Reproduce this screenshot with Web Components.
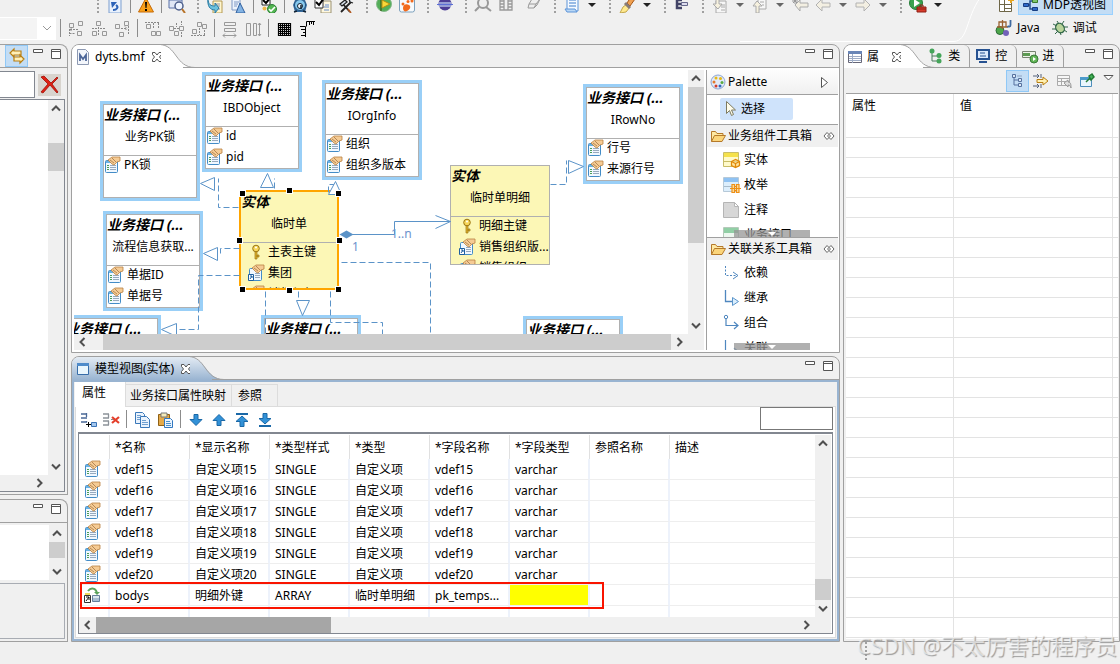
<!DOCTYPE html>
<html lang="zh-CN">
<head>
<meta charset="utf-8">
<title>MDP透视图</title>
<style>
  html, body { margin: 0; height: 100%; background: #f0f0f0; }
  body { font: 12px/16px "Noto Sans", "Noto Sans CJK SC", sans-serif; color: #000; overflow: hidden; }
</style>
</head>
<body>
<ide-window></ide-window>

<script>
const ICONS = {
  undo: '<path d="M2 0h12v15H2z" fill="#e9f1fc" stroke="#7d9fd0"/><path d="M6 12c4 0 6-3 3-5" fill="none" stroke="#2b62b8" stroke-width="2"/><path d="M4 4h6L5 10z" fill="#2b62b8"/>',
  warn: '<path d="M8 0l7.5 14H.5z" fill="#f9a01b" stroke="#c66a06"/><path d="M7 4h2l-.5 6h-1zM7 11h2v2H7z" fill="#000"/>',
  search: '<path d="M0 2h13v8H0z" fill="#dfe6f5" stroke="#5870a8"/><circle cx="10" cy="8" r="4" fill="#eef4ff" stroke="#4d5f8c" stroke-width="1.5"/><path d="M13 11l3 4" stroke="#b8742a" stroke-width="2"/>',
  sync: '<path d="M6 3h9v12H6z" fill="#fff6cf" stroke="#b59a53"/><path d="M8 6h5M8 8h5M10 11h3" stroke="#8a94ad"/><path d="M1 0c0 7 3 8 7 8V5l4 5-4 5v-3C3 12 0 8 1 0z" fill="#6cc1dd" stroke="#2a7ba3"/>',
  docA: '<path d="M2 0h8v12H2z" fill="#edf3fc" stroke="#7f98c4"/><path d="M4 4h5M4 6h4M4 8h3" stroke="#7f98c4"/><path d="M10 5l5 10H6z" fill="#83b3e3" stroke="#2f5f9e"/>',
  check: '<path d="M1 0h8v7H1z" fill="#fff" stroke="#222"/><path d="M2 2l3 3 5-6" fill="none" stroke="#000" stroke-width="2"/><circle cx="11" cy="11" r="4.5" fill="#53b552" stroke="#2c7f35"/><path d="M8 11l2 2 4-4" stroke="#fff" stroke-width="1.6" fill="none"/><circle cx="3.500" cy="10.500" r="2" fill="#efb94d"/>',
  clock: '<path d="M3 2h10l2 5-2 7H3L1 7z" fill="#376b9e"/><circle cx="8" cy="7" r="5.500" fill="#85c7ed" stroke="#1f4d7a"/><circle cx="8" cy="8" r="2.500" fill="#eff8ff" stroke="#123"/><path d="M9 7v4M2 14l3-1M14 14l-3-1" stroke="#123" stroke-width="1.500"/>',
  task: '<path d="M6 3h10v12H6z" fill="#fff8df" stroke="#9b9273"/><path d="M10 7h4M9 9h5M9 12h5" stroke="#668ccc"/><path d="M0 0h8v10H0z" fill="#fff" stroke="#333"/><path d="M1 4l3 3 5-7" fill="none" stroke="#000" stroke-width="2"/>',
  tools: '<path d="M3 14L13 4M4 5l8 9" stroke="#222" stroke-width="1.800"/><path d="M2 6l5-4 2 2-5 4zM11 1l1 3 3 1" fill="#d9e2ec" stroke="#222" stroke-width="1.300"/><path d="M10 11l3 4" stroke="#b45b22" stroke-width="1.500"/>',
  flag: '<circle cx="8" cy="6" r="7.500" fill="#54ae58" stroke="#86b98a"/><path d="M5 1v12" stroke="#3e6b25" stroke-width="1.500"/><path d="M6 2l8 4-8 4z" fill="#f9d738" stroke="#b38d12"/>',
  paw: '<rect x=".5" y="-3" width="15" height="17" rx="2" fill="#f7fafc" stroke="#7da1bd"/><path d="M4 10c0-3 3-5 6-3s0 5-2 6-4 0-4-3z" fill="#f26a1c"/><circle cx="4" cy="6" r="1.500" fill="#f26a1c"/><circle cx="9" cy="3.500" r="1.500" fill="#f26a1c"/><circle cx="13" cy="3" r="1.500" fill="#f26a1c"/>',
  eclipse: '<circle cx="8" cy="6" r="6.500" fill="#4c3d96"/><path d="M2 5h12M2 8h12" stroke="#aebde9" stroke-width="1.500"/><path d="M0 6.500h16" stroke="#5b6fd6"/>',
  searchGray: '<circle cx="8" cy="5" r="5" fill="#eee" stroke="#999" stroke-width="2"/><path d="M11 9l5 4M4 9l-4 4" stroke="#999" stroke-width="2"/>',
  film: '<path d="M2 -1h12v13H2zM6 0v12M10 0v12M2 3h4M2 6h4M2 9h4M10 3h4M10 6h4M10 9h4" fill="none" stroke="#999" stroke-width="1.300"/>',
  eraser: '<path d="M3 6l3-5h8l-3 6-3 3H2zM3 6h7l4-5M10 6l-2 4" fill="#eee" stroke="#9a9a9a"/>',
  script: '<path d="M3-2h11v15H3z" fill="#f4f9ff" stroke="#5d94d8"/><path d="M5 2h7M5 5h7M5 8h7" stroke="#3c7dcb"/><path d="M1 11h10l2 3H3z" fill="#b9d7f5" stroke="#5d94d8"/>',
  brush: '<path d="M1 15l3-6 4-3 3 3-4 5z" fill="#ffe98e" stroke="#c2a64a"/><path d="M8 5l4-6 4 2-5 7z" fill="#f0a050" stroke="#a4581a"/><path d="M6 5l5 5" stroke="#887c78" stroke-width="3"/>',
  link: '<path d="M8 2H3v8h5M3 6h6" fill="none" stroke="#424366" stroke-width="2.500"/><path d="M7.500 4.500h6v3h-6z" fill="#dde" stroke="#66678b"/>',
  docDown: '<path d="M4 3h10v12H4z" fill="#f7f7f7" stroke="#aaa"/><path d="M9 7h4M9 9h4M9 12h4" stroke="#aaa"/><path d="M4 0h3v6h3l-4 5-5-5h3z" fill="#f6f1df" stroke="#aaa"/>',
  docUp: '<path d="M6 1h8v10H6z" fill="#f7f7f7" stroke="#aaa"/><path d="M8 4h4M10 7h2" stroke="#aaa"/><path d="M4 15V8H1l4-5 5 5H7v7z" fill="#f6f1df" stroke="#aaa"/>',
  backStar: '<path d="M3 7l5-5v3h8v4H8v4z" fill="#f3efe2" stroke="#aaa"/><path d="M3 0v6M0 3h6M1 1l4 4M5 1L1 5" stroke="#999"/>',
  back: '<path d="M1 7l6-6v4h8v4H7v4z" fill="#f3efe2" stroke="#b2b2b2"/>',
  fwd: '<path d="M15 7L9 1v4H1v4h8v4z" fill="#f3efe2" stroke="#b2b2b2"/>',
  run: '<circle cx="6" cy="5" r="6.500" fill="#39a250" stroke="#257c37"/><path d="M4 1l6 4-6 4z" fill="#fff"/><path d="M7 9h9v5H7z" fill="#d83a2b" stroke="#8e1e14"/><path d="M10 9V7h3v2M7 11h9" stroke="#8e1e14" fill="none"/>',
  al1: '<path d="M1.500 2.500h4v4h-4zM10.500 .5h4v4h-4z" fill="none" stroke="#999"/><path d="M2 8.500h9M4 6.500l-2 2 2 2M1.500 8v7M1.500 12.500h6" fill="none" stroke="#888" stroke-dasharray="2 1"/><path d="M9.500 10.500h4v4h-4z" fill="none" stroke="#999"/>',
  al2: '<path d="M5.500 .5h4v4h-4zM1.500 10.500h4v4h-4zM11.500 10.500h4v4h-4z" fill="none" stroke="#999"/><path d="M1 7.500h5M9 7.500h6M7.500 6v9" fill="none" stroke="#888" stroke-dasharray="2 1"/>',
  al3: '<path d="M10.500 .5h4v4h-4zM1.500 3.500h4v4h-4zM5.500 11.500h4v4h-4z" fill="none" stroke="#999"/><path d="M7 7.500h6M11 5.500l2 2-2 2M14.500 5v9" fill="none" stroke="#888" stroke-dasharray="2 1"/>',
  al4: '<path d="M1.500 3.500h4v4h-4zM6.500 10.500h4v4h-4zM11.500 10.500h4v4h-4z" fill="none" stroke="#999"/><path d="M0 1.500h15M8.500 2v6M13.500 2v6" fill="none" stroke="#888" stroke-dasharray="2 1"/>',
  al5: '<path d="M1.500 5.500h4v4h-4zM6.500 10.500h4v4h-4zM11.500 5.500h4v4h-4z" fill="none" stroke="#999"/><path d="M6 7.500h5M8.500 2v4M13.500 0v4M13.500 11v5" fill="none" stroke="#888" stroke-dasharray="2 1"/>',
  al6: '<path d="M1.500 8.500h4v4h-4zM6.500 1.500h4v4h-4zM11.500 3.500h4v4h-4z" fill="none" stroke="#999"/><path d="M0 14.500h15M8.500 7v7M13.500 9v5" fill="none" stroke="#888" stroke-dasharray="2 1"/>',
  al7: '<path d="M2.500 1.500h11v3h-11zM2.500 7.500h11v3h-11zM1 14.500h13M3 12.500l-2 2 2 2M12 12.500l2 2-2 2" fill="none" stroke="#999"/>',
  al8: '<path d="M1.500 2.500h4v12h-4zM8.500 2.500h3v12h-3zM14.500 2v13M13 4l1.500-2L16 4M13 13l1.500 2 1.500-2" fill="none" stroke="#999"/>',
  grid: '<path d="M2 2h13v13H2z" fill="#fff"/><path d="M2.500 2v13M4.500 2v13M6.500 2v13M8.500 2v13M10.500 2v13M12.500 2v13M14.500 2v13M2 2.500h13M2 4.500h13M2 6.500h13M2 8.500h13M2 10.500h13M2 12.500h13M2 14.500h13" stroke="#000" stroke-width="1.200"/>',
  ruler: '<path d="M6.500 16V5.500H1M16 .5H7.500v5M2 8.500h4M4 11.500h2M2 14.500h4M10.500 1v3M12.500 1v2M14.500 1v3" fill="none" stroke="#000"/>',
  persp: '<path d="M1.500 2.500h12v12h-12zM1.500 7.500h12M6.500 2.500v12M6.500 11.500h7" fill="#fff" stroke="#6e6648"/><path d="M13 0v6M10 3h6" stroke="#e6a520" stroke-width="2"/>',
  mdp: '<path d="M5 8h3V4h2M8 8v4h2" fill="none" stroke="#234c8d" stroke-width="1.500"/><path d="M1.500 6.500h5v3h-5z" fill="#2f69c8" stroke="#173d81"/><path d="M10.500 2.500h5v3h-5z" fill="#7dc56b" stroke="#37782c"/><path d="M10.500 10.500h5v3h-5z" fill="#2f69c8" stroke="#173d81"/>',
  java: '<circle cx="4" cy="10.500" r="4" fill="#4da64a" stroke="#2c6a37"/><circle cx="10" cy="13" r="3" fill="#7262b8"/><path d="M3 2h7v5H3zM1 7h11M6.500 0v9" fill="none" stroke="#9a6232" stroke-width="1.300"/><path d="M14.500 0v5c0 2-2 2-3 1" fill="none" stroke="#3f6a9f" stroke-width="1.800"/>',
  bug: '<ellipse cx="8" cy="8" rx="4" ry="5" fill="#b8d49a" stroke="#33694a" stroke-width="1.300" transform="rotate(-35 8 8)"/><path d="M1 4l4 2M0 9h4M3 14l3-3M9 15l-1-3M15 12l-3-2M16 7h-4M12 1l-2 3M5 1l2 3" stroke="#33694a"/>',
  swap: '<path d="M5 1L1 5l4 4V7h7V3H5z" fill="#fff0b8" stroke="#b97f12" stroke-width="1.200"/><path d="M11 7l4 4-4 4v-2H5V9h6z" fill="#fff0b8" stroke="#b97f12" stroke-width="1.200"/>',
  redx: '<path d="M-1 0l3-1 7 7 6-6 1 1-6 6 6 8-1 1-7-8-7 8-2-1 7-8z" fill="#e02113" stroke="#9d1009" stroke-width=".8"/>',
  mfile: '<path d="M2.500 .5h8l3 3v12h-11z" fill="#f3f6fb" stroke="#8d99b2"/><path d="M5 12V6l3 4 3-4v6" fill="none" stroke="#4d6799" stroke-width="1.800"/>',
  close: '<path d="M3.500 3.500h2.500l2 2.500 2-2.500h2.500v2L10.500 8l2 2.500v2H10L8 10l-2 2.500H3.500v-2L5.500 8l-2-2.500z" fill="#fff" stroke="#555"/>',
  win: '<path d="M2.500 2.500h11v11h-11z" fill="#eaf6fd" stroke="#376ca8"/><path d="M2 2h12v3H2z" fill="#4f8bca"/>',
  list: '<path d="M1.500 2.500h13v11h-13z" fill="#fff" stroke="#667"/><path d="M1 2h14v3H1z" fill="#6a86b7"/><path d="M2 7.500h12M2 9.500h12M2 11.500h12M5.500 5v9" stroke="#9fadc7"/>',
  tree: '<path d="M4 4v9h5M4 8h5" fill="none" stroke="#4a7a5c"/><circle cx="4" cy="3" r="2.500" fill="#45a55a"/><circle cx="11" cy="7.500" r="2.500" fill="#45a55a"/><circle cx="11" cy="13" r="2.500" fill="#45a55a"/>',
  console: '<rect x="2" y="2" width="12" height="9" fill="#dbe9fb" stroke="#275291" stroke-width="2"/><path d="M5 5h5M5 8h6" stroke="#275291"/><path d="M4 14h8" stroke="#275291" stroke-width="2"/>',
  progress: '<path d="M.5 3.500h13v6H.5z" fill="#eef3e9" stroke="#76836f"/><path d="M1 5h7v3H1z" fill="#5d9b52"/><circle cx="12" cy="11" r="4" fill="#61b455" stroke="#397a38"/><path d="M11 9l3 2-3 2z" fill="#fff"/>',
  cats: '<path d="M4 3v9h4M4 7h4" fill="none" stroke="#56719e"/><path d="M2.500 1.500h3v3h-3zM8.500 5.500h3v3h-3zM8.500 10.500h3v3h-3z" fill="#dce8f6" stroke="#56719e"/><path d="M7 3h5" stroke="#90a3c2"/>',
  adv: '<path d="M0 3h6M4 1l2 2-2 2M8 1v4M0 13h6M4 11l2 2-2 2M8 11v4" fill="none" stroke="#54617a"/><path d="M4 6.500h6V4l5 4-5 4V9.500H4z" fill="#fff0b0" stroke="#b97f12"/>',
  restore: '<path d="M1.500 2.500h12v10h-12zM1.500 5.500h12M1.500 8.500h12M5.500 5v8" fill="#f6f6f6" stroke="#aaa"/><path d="M8 10l4-3v2c3 0 3 3 3 6-1-3-2-3-3-3v2z" fill="#ddd" stroke="#999"/>',
  pinwin: '<path d="M1.500 4.500h11v9h-11z" fill="#eaf6fd" stroke="#4d8dbb"/><path d="M1 4h12v3H1z" fill="#4d9bcb"/><path d="M7 9l4-4M10 3l3-2 2 3-3 3z" stroke="#217a32" fill="#46b45b" stroke-width="1.500"/>',
  prop: '<rect x="1.500" y="3.500" width="12" height="12" rx="1" fill="#f1f8ff" stroke="#438cc7"/><path d="M2 4h6v2H2z" fill="#69b1e2"/><path d="M3 8.500h2M3 10.500h2M3 12.500h2" stroke="#4b9f55"/><path d="M6 8.500h6M6 10.500h6M6 12.500h6" stroke="#97a9be"/><path d="M4 3l4-3h8v4l-3 1-3 3-2-1-2-2z" fill="#f5cb94" stroke="#b98243" stroke-width=".8"/><path d="M6 3l4 3M8 1l4 4" stroke="#9b6a38" stroke-width=".7"/>',
  propref: '<rect x="1.500" y="3.500" width="12" height="12" rx="1" fill="#f1f8ff" stroke="#438cc7"/><path d="M7 8.500h5M7 10.500h5M7 12.500h5" stroke="#97a9be"/><path d="M4 3l4-3h8v4l-3 1-3 3-2-1-2-2z" fill="#f5cb94" stroke="#b98243" stroke-width=".8"/><path d="M6 3l4 3M8 1l4 4" stroke="#9b6a38" stroke-width=".7"/><path d="M.5 9.500h5v6h-5z" fill="#fff" stroke="#1d5fa0"/><path d="M2 14l2-3M2 11h2v2" stroke="#1d5fa0" fill="none"/>',
  key: '<path d="M7 7h2v8H7zM9 11h2v2H9z" fill="#e3b62e" stroke="#9a7412" stroke-width=".7"/><circle cx="8" cy="4.500" r="3.300" fill="#f7d65a" stroke="#9a7412"/><circle cx="8" cy="3.500" r="1" fill="#fff"/>',
  fk: '<path d="M4 4c3-4 8-3 9 2" fill="none" stroke="#5ba35c" stroke-width="2"/><path d="M10 5h6l-3 3z" fill="#5ba35c"/><path d="M8.500 8.500h7v6h-7z" fill="#a8bed3" stroke="#65809c"/><path d="M9 9h6v2H9z" fill="#dce8ef"/><path d="M1 6h5v3H1z" fill="#edd85e"/><path d="M.5 8.500h6v7h-6z" fill="#fff" stroke="#333"/><path d="M2 14l3-4M2 10h3v3" stroke="#111" fill="none"/>',
  addRow: '<path d="M1 2h6M1 6h6M1 10h6M6.500 1v4M6.500 9v1" stroke="#4a6896" fill="none" stroke-width="1.300"/><path d="M6 12.500h5M8.500 10v5" stroke="#000"/><path d="M11.500 10.500h5v4h-5z" fill="#a5c8ee" stroke="#3b73b5"/>',
  delRow: '<path d="M0 2h6M0 6h6M0 9h6M0 13h6M5.500 2v4M5.500 9v4" stroke="#8c9299" fill="none" stroke-width="1.300"/><path d="M8 7.500h3" stroke="#888"/><path d="M9 5l7 6M16 5l-7 6" stroke="#e5402c" stroke-width="2.200"/>',
  copy: '<path d="M1.500 .5h7l2 2v9h-9z" fill="#eaf3fd" stroke="#3a78b9"/><path d="M6.500 4.500h6l3 3v8h-9z" fill="#eaf3fd" stroke="#3a78b9"/><path d="M3 3.500h4M3 5.500h3M3 7.500h3M8 8.500h4M8 10.500h6M8 12.500h6" stroke="#6f9fd0"/>',
  paste: '<path d="M1.500 2.500h11v11h-11z" fill="#e5aa49" stroke="#8f6114"/><path d="M4 1h6v4H4z" fill="#f5ebb9" stroke="#777"/><path d="M7.500 6.500h6l2 2v7h-8z" fill="#eaf3fd" stroke="#3278c0"/><path d="M9 9.500h4M9 11.500h5M9 13.500h5" stroke="#4990cc"/>',
  down: '<path d="M6 2.500h4v5h4L8 13.500 2 7.500h4z" fill="#3291d7" stroke="#1a68a7"/>',
  up: '<path d="M6 13.500h4v-5h4L8 2.500 2 8.500h4z" fill="#3291d7" stroke="#1a68a7"/>',
  top: '<path d="M6 14.500h4v-5h4L8 4 2 9.500h4z" fill="#3291d7" stroke="#1a68a7"/><path d="M2 2h12" stroke="#1a68a7" stroke-width="2"/>',
  bottom: '<path d="M6 1.500h4v5h4L8 12 2 6.500h4z" fill="#3291d7" stroke="#1a68a7"/><path d="M2 14h12" stroke="#1a68a7" stroke-width="2"/>',
  palette: '<circle cx="8" cy="8" r="7" fill="#e2eaf8" stroke="#8ba5d4"/><circle cx="6" cy="4" r="1.500" fill="#e6b917"/><circle cx="10.500" cy="4.500" r="1.500" fill="#e6b917"/><circle cx="12" cy="8.500" r="1.500" fill="#5aab43"/><circle cx="4" cy="8" r="1.500" fill="#e37a2c"/><circle cx="6" cy="12" r="1.500" fill="#d23a2c"/><circle cx="10" cy="12" r="1.500" fill="#2e67c0"/>',
  tri: '<path d="M5.500 3.500l6 5-6 5z" fill="#fff" stroke="#555"/>',
  cursor: '<path d="M4.500 .5v12l3-3 2 5 2-1-2-4.500h4z" fill="#fffdeb" stroke="#7e7b60"/>',
  folder: '<path d="M1.500 13.500v-10h4l1.500 2h6v3" fill="#ffe9a3" stroke="#b5792a"/><path d="M1.500 13.500l3-6h11l-3.500 6z" fill="#fbd57b" stroke="#b5792a"/>',
  pin: '<path d="M6 4.500L3 8l3 3.500L8 9.500l2 2L13 8l-3-3.500L8 6.500zM8 6.500L6.500 8 8 9.500 9.500 8z" fill="#fff" stroke="#666"/>',
  entity: '<path d="M.5 .5h15v14H.5z" fill="#fffacb" stroke="#c8bd68"/><path d="M1 1h14v4H1z" fill="#f5e14b"/><path d="M1 9.500h14" stroke="#c8bd68"/><path d="M8.500 9.500l4-2 4 2v4l-4 2-4-2zM8.500 9.500l4 2 4-2M12.500 11.500v4" fill="#ffe59c" stroke="#e18a0a" stroke-width="1.300"/>',
  enum: '<path d="M.5 .5h15v14H.5z" fill="#dceefc" stroke="#b6c9d8"/><path d="M1 1h14v4H1z" fill="#8fc2f3"/><path d="M1 9.500h14" stroke="#a8bccb"/><path d="M9 7.500h2.500v8H9zM13.500 7.500H16v8h-2.500zM7 11.500h11M11 9.500h3M11 13.500h3" fill="#ffe2a4" stroke="#ee8f15" stroke-width="1.200"/>',
  note: '<path d="M.5 .5h11l4 4v11H.5z" fill="#d7d7d7" stroke="#b5b5b5"/><path d="M11.500 .5v4h4z" fill="#fff" stroke="#b5b5b5"/>',
  iface: '<path d="M.5 .5h15v14H.5z" fill="#edf7ef" stroke="#b5c9ba"/><path d="M1 1h14v5H1z" fill="#91cfa5"/>',
  dep: '<path d="M2.500 1v9.500H14" fill="none" stroke="#4f87bf" stroke-dasharray="2 1.500"/><path d="M10 7l5 3.500-5 3.500" fill="none" stroke="#4f87bf"/>',
  inherit: '<path d="M2.500 0v11.500H9" fill="none" stroke="#4f87bf" stroke-width="1.300"/><path d="M9.500 7.500l6 4-6 4z" fill="#dbeefd" stroke="#5c96cb"/>',
  compose: '<circle cx="3" cy="2" r="1.700" fill="#fff" stroke="#4f87bf"/><path d="M3 4v6.500h12M11 7l4 3.500-4 3.500" fill="none" stroke="#4f87bf" stroke-width="1.200"/>',
  assoc: '<path d="M2.500 0v11.500H15M11 8l4 3.500-4 3.500" fill="none" stroke="#4f87bf" stroke-width="1.200"/>'
};

function define(name, css, render) {
  customElements.define(name, class extends HTMLElement {
    connectedCallback() {
      if (this.shadowRoot) return;
      const root = this.attachShadow({ mode: 'open' });
      const t = document.createElement('template');
      t.innerHTML = `<style>*{box-sizing:border-box}${css}</style>${render(this)}`;
      root.append(t.content.cloneNode(true));
    }
  });
}
const attr = (el, name, other = '') => el.getAttribute(name) ?? other;
const icon = n => `<ui-icon name="${n}"></ui-icon>`;

define('ui-icon', `:host{display:block;width:16px;height:16px;flex:none}svg{display:block;overflow:visible}`,
  el => `<svg width="16" height="16" viewBox="0 0 16 16" aria-hidden="true">${ICONS[attr(el, 'name')]}</svg>`);

/* Toolbar pieces */
define('tool-button', `:host{display:block;flex:none}:host([wide]){padding-left:5px}
  button{display:grid;place-items:center;width:23px;height:var(--tool-height,16px);padding:0;border:1px solid transparent;background:none}
  :host([pressed]) button{background:#c3ddf5;border-color:#90c8f6}
  :host([flat]) button{background:#d8d4ce}`,
  el => `<button type="button" aria-label="${attr(el, 'icon')}">${icon(attr(el, 'icon'))}</button>`);
define('tool-arrow', `:host{display:grid;place-items:center;width:17px;height:16px;flex:none}
  i{border:4px solid transparent;border-top-color:#222;border-bottom:0}:host([dim]) i{border-top-color:#666}`, () => `<i></i>`);
define('tool-grip', `:host{display:block;width:11px;height:18px;margin-left:4px;flex:none}
  i{display:block;width:2px;height:100%;margin:auto;background:repeating-linear-gradient(#a0a0a0 0 2px,transparent 2px 4px)}`, () => `<i></i>`);
define('tool-sep', `:host{display:block;width:8px;height:18px;flex:none}
  i{display:block;width:1px;height:100%;margin:auto;background:#8c8c8c}`, () => `<i></i>`);

/* 'g' grip, '|' separator, 'v' / 'd' drop-down arrows, anything else an icon button */
const tools = s => s.split(' ').map(k => k === 'g' ? '<tool-grip></tool-grip>' : k === '|' ? '<tool-sep></tool-sep>' :
  k === 'v' ? '<tool-arrow></tool-arrow>' : k === 'd' ? '<tool-arrow dim></tool-arrow>' :
  `<tool-button icon="${k}"${k === 'eraser' ? ' wide' : ''}></tool-button>`).join('');

define('main-toolbar', `
  :host{display:grid;grid-template-columns:minmax(0,1fr) 140px;height:44px;flex:none;overflow:hidden}
  .rows,.edge{grid-area:1/1}
  .edge{justify-self:end;width:240px;height:44px}
  .row{display:flex;align-items:flex-end;overflow:hidden}
  .first{height:13px;padding-left:88px}
  .second{height:26px;margin-top:2px;align-items:center}
  .combo{display:flex;align-items:center;width:56px;height:23px;background:#fff;position:relative;flex:none}
  select{appearance:none;width:100%;height:23px;padding:0;border:1px solid #fff;border-left:0;background:linear-gradient(90deg,#f0f0f0 37px,#fff 37px)}
  .combo svg{position:absolute;right:4px;top:8px;pointer-events:none}
  .persp{display:flex;flex-direction:column}
  .line{display:flex;align-items:center;height:26px;padding-left:16px;gap:12px}
  .line.top{height:15px;align-items:flex-end;padding-left:18px;gap:4px}
  button{display:flex;align-items:center;gap:5px;padding:0;border:0;background:none;font:inherit;color:inherit;white-space:nowrap}
  .line button{height:20px}
  .top .on{background:#c3ddf5;border:1px solid #99d1ff;padding:0 6px 0 3px}
`, () => `
  <svg class="edge" viewBox="0 0 240 44" aria-hidden="true"><path d="M0 41.500H214C228 41 226 18 240-2" fill="none" stroke="#fff"/></svg>
  <div class="rows">
    <div class="row first">${tools('g undo | warn | search g sync docA | check | clock task tools g flag paw g eclipse g searchGray film eraser g script v g brush v g link g docDown d docUp d backStar back d fwd d g run v')}</div>
    <div class="row second"><span class="combo"><select aria-label="缩放" disabled></select><svg width="10" height="7"><path d="M1 1l4 4 4-4" fill="none" stroke="#999"/></svg></span>${tools('| al1 al2 al3 | al4 al5 al6 | al7 al8 | grid ruler')}</div>
  </div>
  <div class="persp">
    <div class="line top"><button aria-label="打开透视图">${icon('persp')}</button><button class="on">${icon('mdp')}MDP透视图</button></div>
    <div class="line"><button>${icon('java')}Java</button><button>${icon('bug')}调试</button></div>
  </div>`);

/* Scroll bar: track holds the shares before, of and after the thumb */
define('scroll-bar', `
  :host{display:flex;flex-direction:column;width:16px;background:#f0f0f0;min-height:0;min-width:0}
  :host([horizontal]){flex-direction:row;width:auto;height:16px}
  :host([tail]) svg:first-of-type{display:none}
  svg{display:block;flex:none}.thumb{background:var(--thumb,#cdcdcd)}
`, el => {
  const h = el.hasAttribute('horizontal');
  const [a, b, c] = attr(el, 'track').split(',');
  const arrow = d => `<svg width="${h ? 17 : 16}" height="${h ? 16 : 17}" viewBox="0 0 16 16"><path d="${d}" fill="none" stroke="#505050" stroke-width="2"/></svg>`;
  return arrow(h ? 'M10 4L6 8l4 4' : 'M4 10l4-4 4 4') + `<div style="flex:${a} 1 0"></div><div class="thumb" style="flex:${b} 1 0"></div><div style="flex:${c} 1 0"></div>` +
    arrow(h ? 'M6 4l4 4-4 4' : 'M4 6l4 4 4-4');
});

/* Docked view with tabs, minimise / maximise buttons and a body */
define('view-panel', `
  :host{display:flex;flex-direction:column;min-width:0;min-height:0;border:1px solid #a0a0a0;border-radius:8px 8px 0 0;overflow:hidden;background:#f0f0f0}
  :host([edge]){border-left:0;border-radius:0 8px 0 0}
  header{display:flex;height:23px;flex:none}
  .fill{flex:1;display:flex;justify-content:flex-end;gap:7px;padding:4px 5px 0 0;border-bottom:1px solid #a0a0a0}
  button{display:block;height:11px;padding:0;border:0;background:none}
  button svg{display:block}
  .body{flex:1;min-height:0;min-width:0;display:flex;flex-direction:column}
  :host([focused]) .body{border:2px solid #99b4d1}
`, () => `
  <header><slot name="tabs"></slot><div class="fill">
    <button aria-label="最小化"><svg width="11" height="11"><path d="M.5 .5h9v3h-9z" fill="#fff" stroke="#555"/></svg></button>
    <button aria-label="最大化"><svg width="11" height="11"><path d="M.5 .5h9v9h-9zM.5 2.500h9" fill="#fff" stroke="#555"/></svg></button>
  </div></header>
  <div class="body"><slot></slot></div>`);

define('view-tab', `
  :host{display:flex;height:23px;flex:none}
  button{display:flex;align-items:center;gap:4px;height:23px;padding:0 6px 0 4px;border:0;background:none;font:inherit;color:inherit;white-space:nowrap}
  :host(:not([active])) button{border-bottom:1px solid #a0a0a0;border-right:1px solid #a0a0a0;border-radius:0 6px 0 0;padding:0 9px 1px 5px}
  :host([active]) button{background:#fff;padding:0 0 0 3px}
  :host([active][blue]) button{background:linear-gradient(#e3ebf4,#99b4d1)}
  .curve{display:block;margin:0 -12px 0 -4px}
  .curve .line{fill:none;stroke:#a0a0a0}
`, el => {
  const on = el.hasAttribute('active');
  const blue = el.hasAttribute('blue');
  return `<button>${icon(attr(el, 'icon'))}<slot></slot>${on ? icon('close') : ''}</button>` +
  (on ? `<svg class="curve" width="34" height="23" aria-hidden="true"><defs><linearGradient id="g" x2="0" y2="1"><stop stop-color="#e3ebf4"/><stop offset="1" stop-color="#99b4d1"/></linearGradient></defs><path d="M0 23V0C16 1 16 22 34 22.500V23z" fill="${blue ? 'url(#g)' : '#fff'}"/><path class="line" d="M-2-.5C16-.5 14 22.500 34 22.500"/></svg>` : '');
});

/* Left column */
define('side-explorer', `
  :host{flex:1;display:flex;flex-direction:column;min-height:0;padding:2px 2px 2px 0}
  .find{display:flex;align-items:center;gap:3px;height:29px;flex:none}
  input{width:35px;height:27px;border:1px solid #828790;border-left:0;padding:0;background:#fff}
  .box{flex:1;display:grid;grid-template:minmax(0,1fr) 16px/minmax(0,1fr) 16px;border:1px solid #828790;border-left:0;min-height:0;background:#f0f0f0}
  .tree{background:#fff}
`, () => `<div class="find"><input aria-label="查找"><tool-button icon="redx" flat style="--tool-height:22px"></tool-button></div>
  <div class="box"><div class="tree"></div><scroll-bar track="26,28,286"></scroll-bar><scroll-bar horizontal tail track="0,0,1"></scroll-bar></div>`);
define('side-outline', `
  :host{flex:1;display:flex;flex-direction:column;gap:3px;min-height:0;padding:2px 2px 2px 0}
  .list{flex:1;display:grid;grid-template-columns:minmax(0,1fr) 16px;background:#fff;min-height:0}
  .info{flex:1;border:1px solid #a8acb3;border-left:0}
`, () => `<div class="list"><span></span><scroll-bar track="0,18,5"></scroll-bar></div><div class="info"></div>`);

/* Diagram */
define('er-node', `
  :host{display:flex;flex-direction:column;position:absolute;width:100px;height:100px;border:3px solid #99cff7;background:#fff;overflow:hidden}
  .in{flex:1;border:1px solid #b0b0b0;display:flex;flex-direction:column;min-height:0;overflow:hidden;--lead:0px}
  :host([entity]){border:0;background:#fcf7b6}
  :host([entity]) .in{--lead:8px}
  :host([picked]) .in{border:2px solid #ffa500;--lead:7px}
  .head{height:51px;flex:none;border-bottom:1px solid #b0b0b0}
  b{display:block;font-size:14px;line-height:20px;font-style:italic;white-space:nowrap}
  .name{display:block;text-align:center;line-height:24px;white-space:nowrap}
  .attr{display:flex;align-items:center;gap:4px;height:21px;padding:0 0 4px var(--lead);flex:none;white-space:nowrap}
`, el => `<div class="in"><div class="head"><b>${attr(el, 'kind')}</b><span class="name">${attr(el, 'label')}</span></div>
  ${attr(el, 'attrs').split(',').filter(Boolean).map(a => { const [i, t] = a.split(':'); return `<div class="attr">${icon(i)}<span>${t}</span></div>`; }).join('')}</div>`);

const NODES = [
  [100, 101, '', '业务接口 (...', '业务PK锁', 'prop:PK锁'],
  [202, 72, '', '业务接口 (...', 'IBDObject', 'prop:id,prop:pid'],
  [322, 80, '', '业务接口 (...', 'IOrgInfo', 'prop:组织,prop:组织多版本'],
  [583, 84, '', '业务接口 (...', 'IRowNo', 'prop:行号,prop:来源行号'],
  [103, 211, '', '业务接口 (...', '流程信息获取...', 'prop:单据ID,prop:单据号'],
  [61, 315, '', '业务接口 (...', '', ''],
  [261, 315, '', '业务接口 (...', '', ''],
  [523, 316, '', '业务接口 (...', '', ''],
  [239, 190, 'entity picked', '实体', '临时单', 'key:主表主键,propref:集团,propref:销售组织'],
  [450, 165, 'entity', '实体', '临时单明细', 'key:明细主键,propref:销售组织版...,propref:销售组织']
];
const HANDLES = [[242, 193], [289, 190], [338, 193], [239, 240], [339, 240], [242, 289], [289, 290], [338, 289]];
define('er-canvas', `
  :host{display:block;position:relative;overflow:hidden;background:#fff;min-width:0;min-height:0}
  svg{position:absolute;left:0;top:0}
  .solid{fill:none;stroke:#5b93c8}.dash{fill:none;stroke:#5b93c8;stroke-dasharray:6 3}
  .tri{fill:#fff;stroke:#5b93c8}text{font-size:12px;fill:#6b92cc}
`, () => NODES.map(([x, y, flags, kind, label, attrs]) =>
  `<er-node ${flags} style="left:${x - 74}px;top:${y - 68}px" kind="${kind}" label="${label}" attrs="${attrs}"></er-node>`).join('') + `
  <svg width="614" height="282" viewBox="74 68 614 282">
    <g transform="translate(.5 .5)">
      <path class="dash" d="M238 207H218V178M274 188V178M328 192V184H335M239 248H220V254M239 275H198V329H176M265 291V350M298 291V300M330 291V322H382V350M341 262H430V350M550 184H566V160"/>
      <path class="tri" d="M200 183l14-6v13zM267 173l-7 14h13zM335 181l-7 13h13zM203 253l14-6v13zM161 329l15-6v13zM302 315l-6-15h13zM583 166l-15-6v13z"/>
      <path class="solid" d="M340 234H394V221H450M435 215l15 6-15 7"/>
      <path d="M339 234l7-4 7 4-7 4z" fill="#5b93c8"/>
      ${HANDLES.map(([x, y]) => `<rect x="${x - 3}" y="${y - 3}" width="6" height="6" stroke="#fff"/>`).join('')}
    </g>
    <text x="352" y="251">1</text><text x="391" y="238">1..n</text>
  </svg>`);

define('palette-drawer', `
  :host{display:flex;flex-direction:column;border-top:1px solid #a0a0a0;overflow:hidden;position:relative;min-height:0}
  header{display:flex;align-items:center;height:22px;background:#f0f0f0;flex:none;padding:0 1px 0 3px;gap:2px}
  header span{flex:1;white-space:nowrap}
  button.item{display:flex;align-items:center;gap:5px;height:25px;padding:0 0 0 16px;border:0;background:none;font:inherit;color:inherit;flex:none}
  .more{position:absolute;left:27px;bottom:0;width:76px;height:7px;background:rgba(150,150,150,.75);border:0;padding:0;display:grid;place-items:center}
  .more i{border:4px solid transparent;border-top-color:#fff;border-bottom:0}
`, el => `<header>${icon('folder')}<span>${attr(el, 'label')}</span>${icon('pin')}</header>
  ${attr(el, 'items').split(',').map(a => { const [i, t] = a.split(':'); return `<button class="item">${icon(i)}${t}</button>`; }).join('')}
  <button class="more" aria-label="向下滚动"><i></i></button>`);

define('tool-palette', `
  :host{display:flex;flex-direction:column;border-left:1px solid #a0a0a0;background:#fff;min-height:0}
  .title{display:flex;align-items:center;gap:2px;height:25px;padding:0 6px 0 3px;border-bottom:1px solid #a0a0a0;background:linear-gradient(#fdfdfd,#f0f0f0);flex:none}
  .title span{flex:1}
  .pick{display:flex;align-items:center;gap:3px;width:73px;height:22px;margin:3px 0 4px 13px;padding:0 0 0 2px;border:0;border-radius:2px;background:#cfe3fb;font:inherit;color:inherit;flex:none}
  palette-drawer{flex:114 1 0}
`, () => `<div class="title">${icon('palette')}<span>Palette</span>${icon('tri')}</div>
  <button class="pick">${icon('cursor')}选择</button>
  <palette-drawer label="业务组件工具箱" items="entity:实体,enum:枚举,note:注释,iface:业务接口"></palette-drawer>
  <palette-drawer label="关联关系工具箱" items="dep:依赖,inherit:继承,compose:组合,assoc:关联"></palette-drawer>`);

define('diagram-editor', `
  :host{flex:1;display:grid;grid-template:minmax(0,1fr) 16px/minmax(0,1fr) 16px 134px;padding:0 1px 2px 2px;background:#fff;min-height:0}
  er-canvas{grid-area:1/1}.v{grid-area:1/2;margin-top:2px}.h{grid-area:2/1}
  .corner{grid-area:2/2;background:#f0f0f0}
  tool-palette{grid-area:1/3/3/4;margin:2px 0 0 2px}
`, () => `<er-canvas></er-canvas><scroll-bar class="v" track="0,155,74"></scroll-bar>
  <scroll-bar class="h" horizontal track="12,567,0"></scroll-bar><div class="corner"></div><tool-palette></tool-palette>`);

/* Attribute grid of the selected entity */
const HEAD = ['', '*名称', '*显示名称', '*类型样式', '*类型', '*字段名称', '*字段类型', '参照名称', '描述'];
const ROWS = [15, 16, 17, 18, 19, 20].map(n => ['prop', 'vdef' + n, '自定义项' + n, 'SINGLE', '自定义项', 'vdef' + n, 'varchar', '', '']);
ROWS.push(['fk', 'bodys', '明细外键', 'ARRAY', '临时单明细', 'pk_temps...', '', '', '']);
define('attribute-grid', `
  :host{display:grid;grid-template:minmax(0,1fr) 16px/minmax(0,1fr) 16px;flex:1;min-height:0;border:1px solid #828790;border-top-width:2px;padding:1px 1px 0 0;background:#fff;--thumb:#cdcdcd}
  .view{overflow:hidden;position:relative}
  table{border-collapse:separate;border-spacing:0;table-layout:fixed;width:100%}
  th,td{padding:1px 0 0 5px;text-align:left;font-weight:400;white-space:nowrap;overflow:hidden}
  th{height:24px;border-right:1px solid #e0e0e0}
  td{height:21px;line-height:19px;border-right:2px solid #edf2fb;border-bottom:1px solid #eee}
  td:first-child{padding:0 0 0 5px}
  th:last-child,td:last-child{border-right:0}
  col{width:80px}col:first-child{width:31px}col:last-child{width:auto}
  .mark{padding:0}.mark i{display:block;height:20px;background:#ff0}
  .ring{position:absolute;left:1px;bottom:8px;width:524px;height:27px;border:2px solid #f91400;pointer-events:none}
  .h{--thumb:#a6a6a6}.corner{background:#f0f0f0}
`, () => `<div class="view"><table><colgroup>${HEAD.map(() => '<col>').join('')}</colgroup>
  <thead><tr>${HEAD.map(h => `<th scope="col">${h}</th>`).join('')}</tr></thead>
  <tbody>${ROWS.map(r => `<tr>${r.map((c, i) => i === 0 ? `<td>${icon(c)}</td>` : r[0] === 'fk' && i === 6 ? '<td class="mark"><i></i></td>' : `<td>${c}</td>`).join('')}</tr>`).join('')}
  <tr>${HEAD.map(() => '<td></td>').join('')}</tr></tbody></table><div class="ring"></div></div>
  <scroll-bar track="126,21,0"></scroll-bar><scroll-bar class="h" horizontal track="0,235,466"></scroll-bar><div class="corner"></div>`);

define('model-view', `
  :host{flex:1;display:flex;flex-direction:column;min-height:0;padding:0 1px 1px 1px}
  nav{display:flex;height:25px;align-items:flex-end;flex:none}
  nav button{height:23px;padding:0 5px;border:1px solid #dcdcdc;border-left:0;background:#f0f0f0;font:inherit;color:inherit;text-align:left}
  nav .on{width:51px;height:25px;padding:0 7px 3px;border:0;border-right:1px solid #dcdcdc;background:#fff}
  nav .on + button{width:106px;padding:0 0 0 4px}
  nav button:last-of-type{width:46px;padding-left:6px}
  nav::after{content:"";flex:1;border-bottom:1px solid #dcdcdc}
  .page{flex:1;display:flex;flex-direction:column;min-height:0;background:#fff;border:1px solid #dcdcdc;border-top:0}
  .bar{display:flex;align-items:center;height:25px;padding:0 2px 2px 0;flex:none}
  .bar input{width:73px;height:23px;margin-left:auto;border:1px solid #777;padding:0 2px;font:inherit}
  attribute-grid{margin:0 2px 3px}
`, () => `<nav><button class="on">属性</button><button>业务接口属性映射</button><button>参照</button></nav>
  <div class="page"><div class="bar">${tools('addRow delRow | copy paste | down up top bottom')}<input aria-label="筛选"></div><attribute-grid></attribute-grid></div>`);

define('property-sheet', `
  :host{flex:1;display:flex;flex-direction:column;min-height:0;padding:0 1px 2px 2px}
  .bar{display:flex;align-items:center;justify-content:flex-end;height:25px;flex:none;--tool-height:22px}
  .bar i{width:20px;height:22px;display:grid;place-items:start center;padding-top:5px}
  .view{flex:1;min-height:0;overflow:hidden;background:#fff;border-top:1px solid #a0a0a0}
  table{width:100%;border-spacing:0;table-layout:fixed}
  th{height:44px;padding:2px 0 0 6px;vertical-align:top;text-align:left;font-weight:400;line-height:20px}
  td{height:20px;padding:0}
  th,td{border-right:1px solid #e3e3e3;border-bottom:1px solid #e3e3e3}
  th:last-child,td:last-child{border-right:0}
  col:first-child{width:108px}col:last-child{width:5px}
`, () => `<div class="bar"><tool-button icon="cats" pressed></tool-button>${tools('adv restore pinwin')}<i><svg width="11" height="7"><path d="M1 .5h9L5.500 5z" fill="#fff" stroke="#555"/></svg></i></div>
  <div class="view"><table><colgroup><col><col><col></colgroup><thead><tr><th scope="col">属性</th><th scope="col">值</th><th></th></tr></thead>
  <tbody>${'<tr><td></td><td></td><td></td></tr>'.repeat(25)}</tbody></table></div>`);

define('ide-window', `
  :host{display:flex;flex-direction:column;height:100vh;background:#f0f0f0;overflow:hidden}
  main{flex:1;min-height:0;display:grid;grid-template-columns:68px minmax(0,1fr) 277px;gap:3px}
  .left{display:grid;grid-template-rows:minmax(0,451fr) minmax(0,143fr);gap:4px;min-height:0}
  .mid{display:grid;grid-template-rows:minmax(0,309fr) minmax(0,286fr);gap:3px;min-width:0;min-height:0}
  .toggle{display:block;border-bottom:1px solid #a0a0a0;padding-left:5px;--tool-height:22px}
  footer{display:flex;justify-content:flex-end;height:22px;flex:none;position:relative;padding-right:249px}
  .credit{position:absolute;right:3px;bottom:4px;font-size:22px;line-height:30px;color:rgba(255,255,255,.6);text-shadow:1px 1px 1px #999;white-space:nowrap}
`, () => `<main-toolbar></main-toolbar>
  <main>
    <div class="left">
      <view-panel edge><span slot="tabs" class="toggle"><tool-button icon="swap" pressed></tool-button></span><side-explorer></side-explorer></view-panel>
      <view-panel edge><side-outline></side-outline></view-panel>
    </div>
    <div class="mid">
      <view-panel><view-tab slot="tabs" icon="mfile" active>dyts.bmf</view-tab><diagram-editor></diagram-editor></view-panel>
      <view-panel focused><view-tab slot="tabs" icon="win" active blue>模型视图(实体)</view-tab><model-view></model-view></view-panel>
    </div>
    <view-panel><view-tab slot="tabs" icon="list" active>属&nbsp;&nbsp;</view-tab><view-tab slot="tabs" icon="tree">类</view-tab><view-tab slot="tabs" icon="console">控</view-tab><view-tab slot="tabs" icon="progress">进</view-tab><property-sheet></property-sheet></view-panel>
  </main>
  <footer><tool-grip></tool-grip><span class="credit">CSDN @不太厉害的程序员</span></footer>`);
</script>
</body>
</html>
